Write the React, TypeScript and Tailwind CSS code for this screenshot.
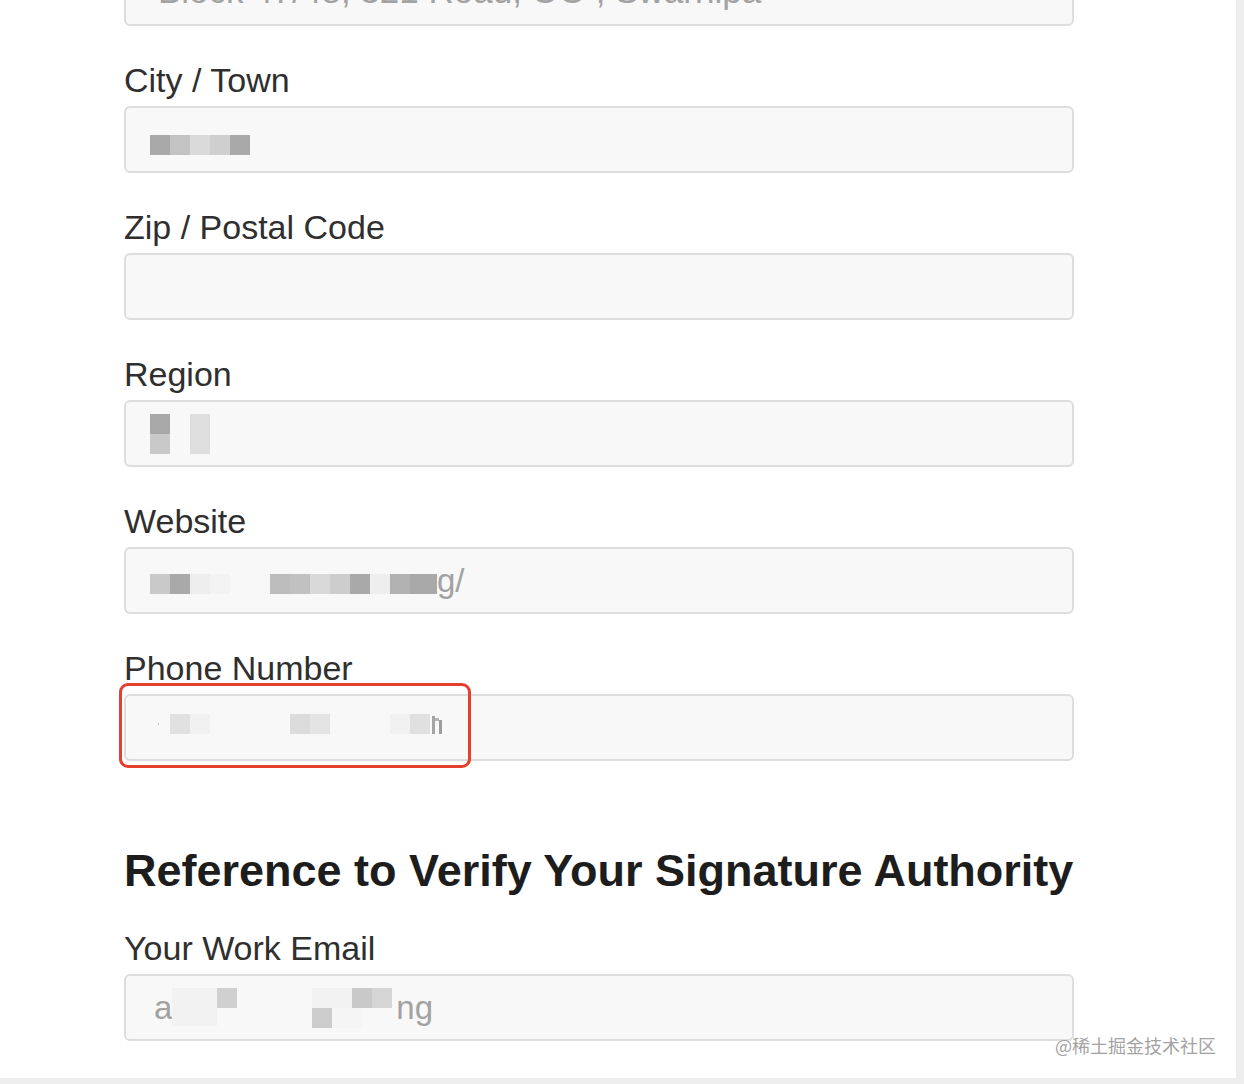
import type { ReactNode } from "react";

type Cell = [number, number, number, number, string];

function Mosaic({ w, h, cells, className = "" }: { w: number; h: number; cells: Cell[]; className?: string }) {
  return (
    <svg width={w} height={h} viewBox={`0 0 ${w} ${h}`} className={`shrink-0 ${className}`}>
      {cells.map(([x, y, cw, ch, fill], i) => (
        <rect key={i} x={x} y={y} width={cw} height={ch} fill={fill} />
      ))}
    </svg>
  );
}

function Label({ children }: { children: ReactNode }) {
  return <label className="h-[40px] text-[34px] leading-[40px] text-[#2f2f2f]">{children}</label>;
}

function Field({ label, children }: { label: string; children?: ReactNode }) {
  return (
    <div className="flex flex-col gap-[6px]">
      <Label>{label}</Label>
      <Box>{children}</Box>
    </div>
  );
}

function Box({ children, className = "" }: { children?: ReactNode; className?: string }) {
  return (
    <div
      className={`relative flex h-[67px] w-[950px] items-center rounded-[6px] border-2 border-[#dddddd] bg-[#f8f8f8] pl-[24px] text-[33px] text-[#a2a2a2] ${className}`}
    >
      {children}
    </div>
  );
}

export default function App() {
  return (
    <div className="flex h-[1084px] w-[1244px] flex-col overflow-hidden bg-[#efeeef] font-['Liberation_Sans',Arial,sans-serif]">
      <div className="relative h-[1078px] w-[1236px] overflow-hidden bg-white">
        <div className="flex flex-col gap-[34px] pl-[124px]">
          <Box className="-mt-[41px] leading-none">
            <span className="mt-[-4px] pl-[8px] text-[35px]">Block 47/48, 321 Road, OO , Swarnipa</span>
          </Box>

          <Field label="City / Town">
            <Mosaic
              w={100}
              h={20}
              className="mt-[10px]"
              cells={[
                [0, 0, 20, 20, "#a9a9a9"],
                [20, 0, 20, 20, "#c3c3c3"],
                [40, 0, 20, 20, "#dadada"],
                [60, 0, 20, 20, "#cfcfcf"],
                [80, 0, 20, 20, "#a9a9a9"],
              ]}
            />
          </Field>

          <Field label="Zip / Postal Code" />

          <Field label="Region">
            <Mosaic
              w={60}
              h={40}
              cells={[
                [0, 0, 20, 20, "#a8a8a8"],
                [0, 20, 20, 20, "#c9c9c9"],
                [40, 0, 20, 40, "#dedede"],
              ]}
            />
          </Field>

          <Field label="Website">
            <Mosaic
              w={287}
              h={20}
              className="mt-[6px]"
              cells={[
                [0, 0, 20, 20, "#c9c9c9"],
                [20, 0, 20, 20, "#a9a9a9"],
                [40, 0, 20, 20, "#eeeeee"],
                [60, 0, 20, 20, "#f3f3f3"],
                [120, 0, 20, 20, "#bdbdbd"],
                [140, 0, 20, 20, "#c1c1c1"],
                [160, 0, 20, 20, "#d9d9d9"],
                [180, 0, 20, 20, "#cdcdcd"],
                [200, 0, 20, 20, "#a9a9a9"],
                [220, 0, 20, 20, "#eeeeee"],
                [240, 0, 20, 20, "#b1b1b1"],
                [260, 0, 27, 20, "#a9a9a9"],
              ]}
            />
            <span className="leading-none">g/</span>
          </Field>

          <div className="flex flex-col gap-[6px]">
            <Label>Phone Number</Label>
            <Box>
              <Mosaic
                w={320}
                h={20}
                className="mb-[8px]"
                cells={[
                  [8, 9, 1, 2, "#bdbdbd"],
                  [20, 0, 20, 20, "#e1e1e1"],
                  [40, 0, 20, 20, "#f1f1f1"],
                  [140, 0, 20, 20, "#dcdcdc"],
                  [160, 0, 20, 20, "#e4e4e4"],
                  [240, 0, 20, 20, "#f1f1f1"],
                  [260, 0, 20, 20, "#e0e0e0"],
                  [282, 2, 3, 18, "#a4a4a4"],
                  [285, 4, 4, 3, "#b4b4b4"],
                  [289, 6, 3, 20, "#9e9e9e"],
                ]}
              />
              <div className="pointer-events-none absolute -left-[7px] -top-[13px] h-[85px] w-[352px] rounded-[9px] border-[3px] border-[#e4402d]" />
            </Box>
          </div>

          <h2 className="mt-[48px] h-[56px] text-[45px] font-bold leading-[56px] text-[#1d1d1d]">
            Reference to Verify Your Signature Authority
          </h2>

          <div className="-mt-[5px] flex flex-col gap-[6px]">
            <Label>Your Work Email</Label>
            <Box>
              <span className="pl-[4px] leading-none">a</span>
              <Mosaic
                w={230}
                h={50}
                cells={[
                  [0, 5, 45, 38, "#f2f2f2"],
                  [45, 5, 20, 20, "#d0d0d0"],
                  [140, 5, 40, 20, "#f2f2f2"],
                  [140, 25, 20, 20, "#cccccc"],
                  [160, 25, 30, 20, "#f5f5f5"],
                  [180, 5, 20, 20, "#c9c9c9"],
                  [200, 5, 20, 20, "#d5d5d5"],
                ]}
              />
              <span className="-ml-[6px] leading-none">ng</span>
            </Box>
          </div>
        </div>

        <div className="absolute left-[1055px] top-[1033px] font-['Noto_Sans_CJK_SC',sans-serif] text-[18px] leading-[24px] text-[#a3a3a3]">
          @稀土掘金技术社区
        </div>
      </div>
    </div>
  );
}
